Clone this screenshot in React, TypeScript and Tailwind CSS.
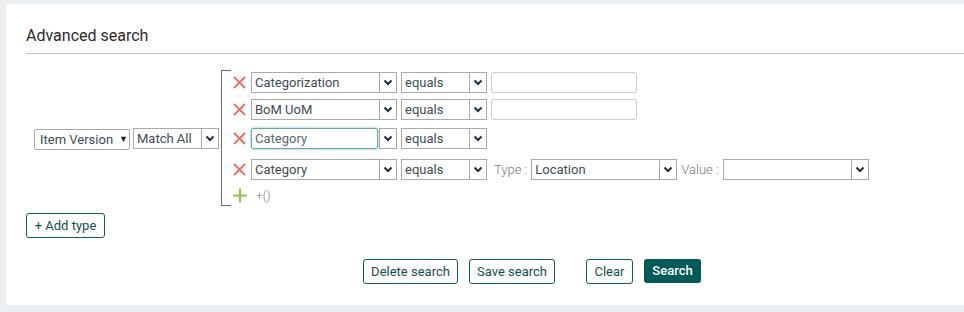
import React from "react";

function Chevron() {
    return (
        <svg width="10" height="7" viewBox="0 0 10 7">
            <path d="M1.5 1.5 L5 5 L8.5 1.5" fill="none" stroke="#1e2f48" strokeWidth="2" />
        </svg>
    );
}

function RemoveIcon() {
    return (
        <svg width="13" height="13" viewBox="0 0 13 13" className="shrink-0">
            <path d="M1 1 L12 12 M12 1 L1 12" stroke="#f26b63" strokeWidth="1.8" />
        </svg>
    );
}

function Sel({ text, w, focused }: { text: string; w: string; focused?: boolean }) {
    if (focused) {
        return (
            <div className={`flex h-[21px] ${w}`}>
                <div className="flex-1 flex items-center pl-[3px] border border-[#5fa9a6] rounded-[2px] shadow-[0_0_3px_rgba(60,150,150,0.6)] text-[#5a6870]">
                    {text}
                </div>
                <div className="w-[18px] ml-[1px] flex items-center justify-center border border-[#a9a9a9]">
                    <Chevron />
                </div>
            </div>
        );
    }
    return (
        <div className={`flex h-[21px] border border-[#a9a9a9] ${w}`}>
            <div className="flex-1 flex items-center pl-[3px] text-[#3d4b53] whitespace-nowrap">{text}</div>
            <div className="w-[17px] flex items-center justify-center border-l border-[#a9a9a9]">
                <Chevron />
            </div>
        </div>
    );
}

function TextBox() {
    return <div className="w-[146px] h-[21px] ml-[4px] border border-[#c4d0d6] rounded-[3px]" />;
}

function Btn({ children, cls }: { children: React.ReactNode; cls: string }) {
    return (
        <div className={`h-[25px] flex items-center justify-center border border-[#0b5d5a] rounded-[3px] text-[13px] text-[#164e4d] ${cls}`}>
            {children}
        </div>
    );
}

export default function App() {
    return (
        <div className="w-[964px] h-[312px] bg-[#eceff2] pt-[4px] pl-[6px] font-['Roboto',sans-serif] text-[13px]">
            <div className="bg-white h-[301px] pl-[20px] pt-[22px]">
                <h1 className="text-[16px] leading-[20px] text-[#2a2a2a]">Advanced search</h1>
                <div className="h-px bg-[#b7c8cb] mt-[7px]" />

                <div className="flex items-center mt-[16px]">
                    <div className="ml-[8px] mt-[3px] w-[96px] h-[21px] border border-[#a9a9a9] rounded-[2px] flex items-center pl-[5px] text-[#3d4b53]">
                        Item Version
                        <span className="ml-[6px] text-[9px] text-[#222]">▼</span>
                    </div>
                    <div className="ml-[3px] mt-[1px]">
                        <Sel text="Match All" w="w-[86px]" />
                    </div>

                    <div className="ml-[2px] w-[10px] self-stretch border-l border-t border-b border-[#6b6b6b]" />

                    <div className="flex flex-col pl-[2px] pb-[3px]">
                        <div className="flex items-center mt-[2px]">
                            <RemoveIcon />
                            <div className="ml-[5px]"><Sel text="Categorization" w="w-[146px]" /></div>
                            <div className="ml-[4px]"><Sel text="equals" w="w-[86px]" /></div>
                            <TextBox />
                        </div>
                        <div className="flex items-center mt-[6px]">
                            <RemoveIcon />
                            <div className="ml-[5px]"><Sel text="BoM UoM" w="w-[146px]" /></div>
                            <div className="ml-[4px]"><Sel text="equals" w="w-[86px]" /></div>
                            <TextBox />
                        </div>
                        <div className="flex items-center mt-[8px]">
                            <RemoveIcon />
                            <div className="ml-[5px]"><Sel text="Category" w="w-[146px]" focused /></div>
                            <div className="ml-[4px]"><Sel text="equals" w="w-[86px]" /></div>
                        </div>
                        <div className="flex items-center mt-[10px]">
                            <RemoveIcon />
                            <div className="ml-[5px]"><Sel text="Category" w="w-[146px]" /></div>
                            <div className="ml-[4px]"><Sel text="equals" w="w-[86px]" /></div>
                            <span className="ml-[7px] font-light text-[#6f7b82]">Type :</span>
                            <div className="ml-[4px]"><Sel text="Location" w="w-[146px]" /></div>
                            <span className="ml-[4px] font-light text-[#6f7b82]">Value :</span>
                            <div className="ml-[4px]"><Sel text="" w="w-[146px]" /></div>
                        </div>
                        <div className="flex items-center mt-[8px] h-[15px]">
                            <svg width="14" height="15" viewBox="0 0 14 15" className="shrink-0">
                                <path d="M7 0.5 V14.5 M0 7.5 H14" stroke="#8cc63f" strokeWidth="2" />
                            </svg>
                            <span className="ml-[9px] font-light text-[#6f7b82] text-[12px]">+()</span>
                        </div>
                    </div>
                </div>

                <div className="flex mt-[7px]">
                    <Btn cls="w-[79px]">+ Add type</Btn>
                </div>

                <div className="flex mt-[21px] pl-[337px]">
                    <Btn cls="w-[95px]">Delete search</Btn>
                    <Btn cls="w-[86px] ml-[11px]">Save search</Btn>
                    <Btn cls="w-[47px] ml-[31px]">Clear</Btn>
                    <div className="w-[57px] h-[24px] ml-[11px] flex items-center justify-center rounded-[3px] bg-[#005a57] text-white text-[13px] font-medium">
                        Search
                    </div>
                </div>
            </div>
        </div>
    );
}
